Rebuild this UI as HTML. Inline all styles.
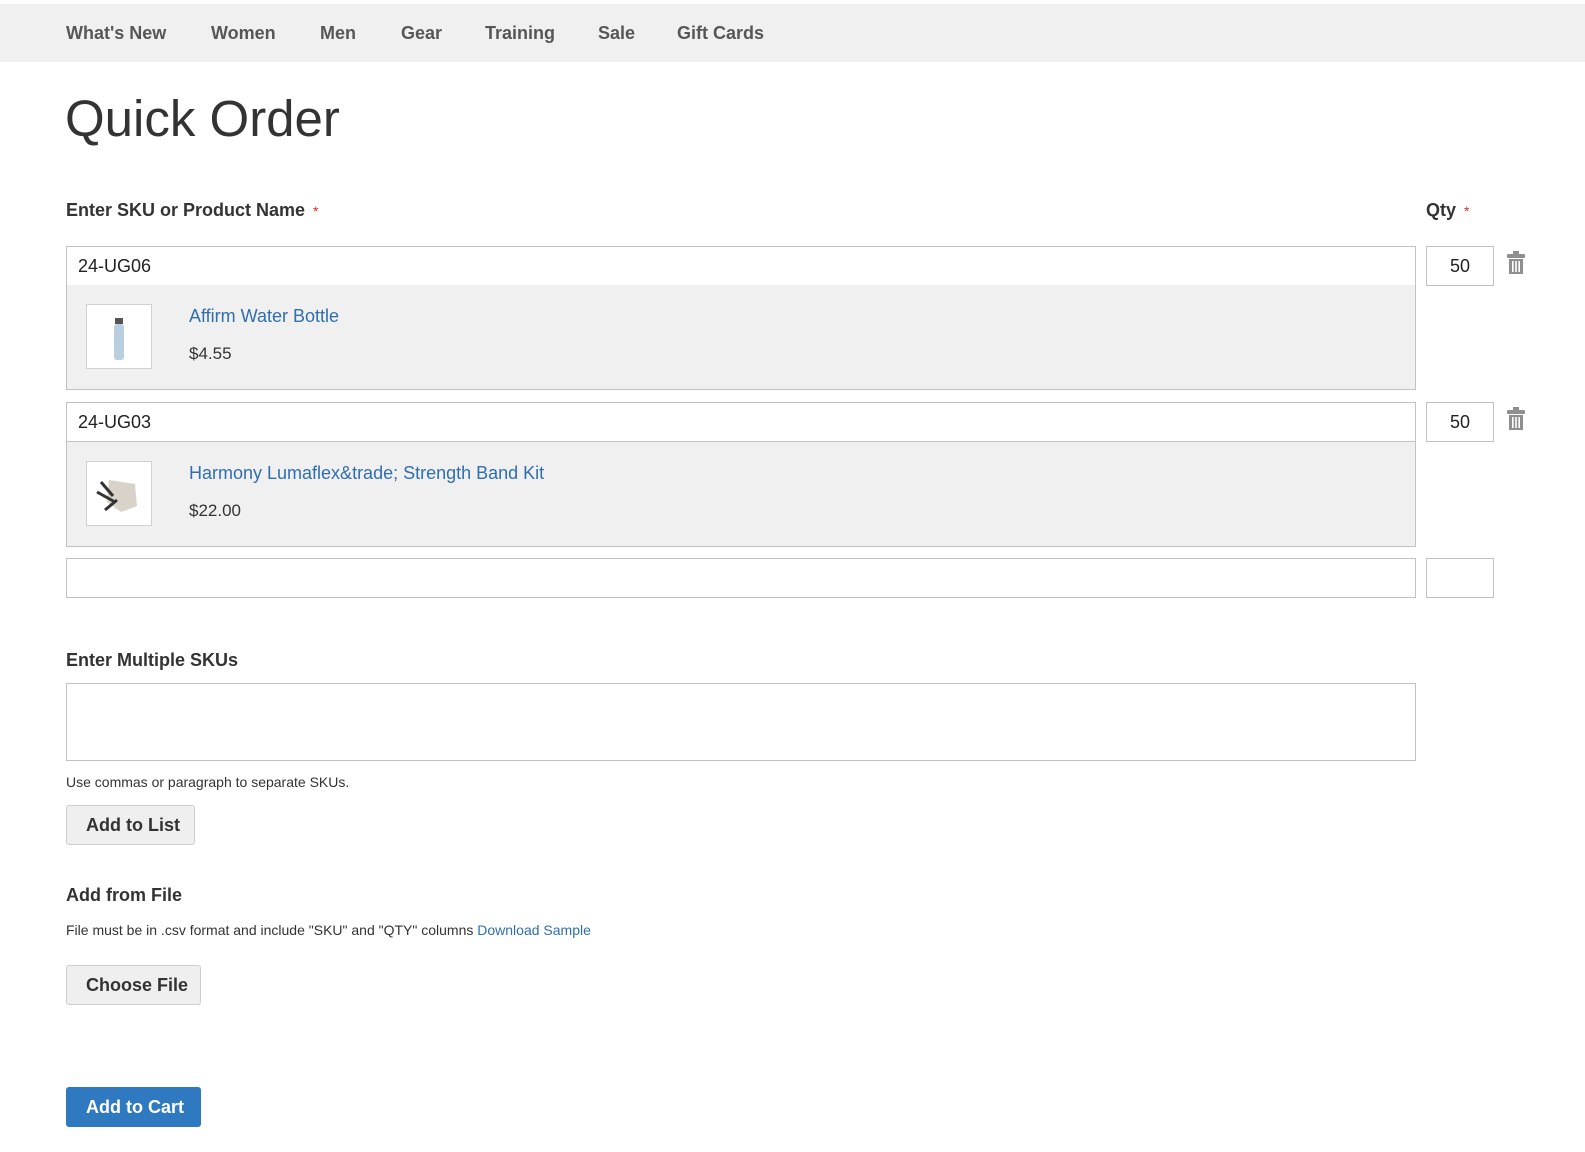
<!DOCTYPE html>
<html><head><meta charset="utf-8"><style>
*{box-sizing:border-box;margin:0;padding:0}
body{width:1585px;height:1152px;background:#fff;font-family:"Liberation Sans",sans-serif;color:#333;position:relative;overflow:hidden}
.a{position:absolute}
.nav{left:0;top:4px;width:1585px;height:58px;background:#f0f0f0}
.nav span{position:absolute;top:19px;font-size:18px;font-weight:bold;color:#575757}
.inp{position:absolute;border:1px solid #c2c2c2;background:#fff}
.sku{left:66px;width:1350px;height:40px;font-size:18px;padding:9px 11px;color:#222}
.qty{left:1426px;width:68px;height:40px;font-size:18px;text-align:center;padding-top:9px;color:#222}
.prod{left:66px;width:1350px;height:105px;background:#f0f0f0;border:1px solid #c2c2c2;border-top:none}
.thumb{position:absolute;left:19px;top:19px;width:66px;height:65px;background:#fff;border:1px solid #d1d1d1}
.pn{position:absolute;left:122px;top:21px;font-size:18px;color:#2f6eb1}
.pp{position:absolute;left:122px;top:59px;font-size:17px;color:#333}
.lbl{font-size:18px;font-weight:bold;color:#333}
.star{color:#e02b27;font-size:14px;margin-left:8px;font-weight:normal}
.btn{position:absolute;left:66px;height:40px;background:#efefef;border:1px solid #cdcdcd;border-radius:3px;font-size:18px;font-weight:bold;color:#333;padding:9px 0 0 19px}
.trash{position:absolute;left:1507px}
</style></head><body>
<div class="a nav">
<span style="left:66px">What's New</span><span style="left:211px">Women</span><span style="left:320px">Men</span><span style="left:401px">Gear</span><span style="left:485px">Training</span><span style="left:598px">Sale</span><span style="left:677px">Gift Cards</span>
</div>
<div class="a" style="left:65px;top:89px;font-size:51px;font-weight:300;color:#333">Quick Order</div>
<div class="a lbl" style="left:66px;top:200px">Enter SKU or Product Name<span class="star">*</span></div>
<div class="a lbl" style="left:1426px;top:200px">Qty<span class="star">*</span></div>

<div class="inp sku" style="top:246px">24-UG06</div>
<div class="inp qty" style="top:246px">50</div>
<svg class="trash" style="top:251px" width="18" height="24" viewBox="0 0 18 24"><rect x="6" y="0" width="6" height="3" fill="#8f8f8f"/><rect x="0" y="3" width="18" height="4" rx="1" fill="#8f8f8f"/><rect x="2" y="8" width="14" height="15" fill="#8f8f8f"/><rect x="5" y="10" width="1.6" height="11" fill="#fff"/><rect x="8.2" y="10" width="1.6" height="11" fill="#fff"/><rect x="11.4" y="10" width="1.6" height="11" fill="#fff"/></svg>
<div class="a prod" style="top:285px"><div class="thumb"><svg width="64" height="63"><rect x="28" y="13" width="8" height="6" fill="#555"/><rect x="27" y="19" width="10" height="36" rx="3" fill="#b9cfe0"/></svg></div><div class="pn">Affirm Water Bottle</div><div class="pp">$4.55</div></div>

<div class="inp sku" style="top:402px">24-UG03</div>
<div class="inp qty" style="top:402px">50</div>
<svg class="trash" style="top:407px" width="18" height="24" viewBox="0 0 18 24"><rect x="6" y="0" width="6" height="3" fill="#8f8f8f"/><rect x="0" y="3" width="18" height="4" rx="1" fill="#8f8f8f"/><rect x="2" y="8" width="14" height="15" fill="#8f8f8f"/><rect x="5" y="10" width="1.6" height="11" fill="#fff"/><rect x="8.2" y="10" width="1.6" height="11" fill="#fff"/><rect x="11.4" y="10" width="1.6" height="11" fill="#fff"/></svg>
<div class="a prod" style="top:442px"><div class="thumb"><svg width="64" height="63"><path d="M22 18 L48 22 L50 44 L34 50 L20 40 Z" fill="#d8d2c8"/><path d="M10 30 L28 40 M14 20 L26 34 M18 48 L30 38" stroke="#333" stroke-width="3"/></svg></div><div class="pn">Harmony Lumaflex&amp;trade; Strength Band Kit</div><div class="pp">$22.00</div></div>

<div class="inp sku" style="top:558px"></div>
<div class="inp qty" style="top:558px"></div>

<div class="a lbl" style="left:66px;top:650px">Enter Multiple SKUs</div>
<div class="inp" style="left:66px;top:683px;width:1350px;height:78px"></div>
<div class="a" style="left:66px;top:774px;font-size:14px;color:#333">Use commas or paragraph to separate SKUs.</div>
<div class="btn" style="top:805px;width:129px">Add to List</div>
<div class="a lbl" style="left:66px;top:885px">Add from File</div>
<div class="a" style="left:66px;top:922px;font-size:14px;color:#333">File must be in .csv format and include "SKU" and "QTY" columns <span style="color:#2f6eb1">Download Sample</span></div>
<div class="btn" style="top:965px;width:135px">Choose File</div>
<div class="btn" style="top:1087px;width:135px;background:#2f79c1;border-color:#2f79c1;color:#fff">Add to Cart</div>
</body></html>
